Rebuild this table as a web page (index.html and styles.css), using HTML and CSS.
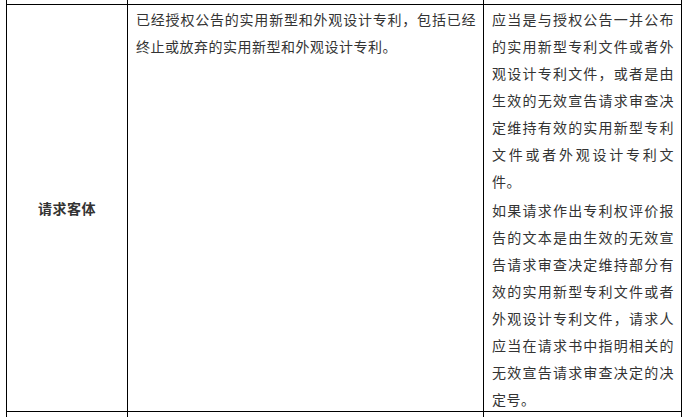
FILE: index.html
```html
<!DOCTYPE html>
<html lang="zh-CN">
<head>
<meta charset="utf-8">
<title>请求客体</title>
<link rel="stylesheet" href="styles.css">
</head>
<body>
<div class="page">
  <table class="grid">
    <colgroup>
      <col class="c1">
      <col class="c2">
      <col class="c3">
    </colgroup>
    <tr class="edge-row top-row">
      <td></td><td></td><td></td>
    </tr>
    <tr class="main-row">
      <td class="label">请求客体</td>
      <td class="text">
        <p class="para">已经授权公告的实用新型和外观设计专利，包括已经终止或放弃的实用新型和外观设计专利。</p>
      </td>
      <td class="text">
        <p class="para">应当是与授权公告一并公布的实用新型专利文件或者外观设计专利文件，或者是由生效的无效宣告请求审查决定维持有效的实用新型专利文件或者外观设计专利文件。</p>
        <p class="para next">如果请求作出专利权评价报告的文本是由生效的无效宣告请求审查决定维持部分有效的实用新型专利文件或者外观设计专利文件，请求人应当在请求书中指明相关的无效宣告请求审查决定的决定号。</p>
      </td>
    </tr>
    <tr class="edge-row bottom-row">
      <td></td><td></td><td></td>
    </tr>
  </table>
</div>
</body>
</html>
```
FILE: styles.css
```css
html, body {
  margin: 0;
  padding: 0;
  background: #ffffff;
  overflow: hidden;
}

.page {
  padding-left: 6px;
  font-family: "Noto Sans CJK SC", "Noto Sans", sans-serif;
  font-size: 14px;
  color: #333333;
  letter-spacing: 0.5px;
}

.grid {
  border-collapse: separate;
  border-spacing: 0;
  table-layout: fixed;
  width: 676px;
}

.c1 { width: 121px; }
.c2 { width: 356px; }
.c3 { width: 199px; }

.grid td {
  border-left: 1px solid #000000;
  border-bottom: 1px solid #000000;
  padding: 0;
}

.grid td:last-child {
  border-right: 1px solid #000000;
}

.top-row td {
  height: 4px;
}

.bottom-row td {
  height: 5px;
  border-bottom: none;
}

.main-row td {
  vertical-align: top;
}

.label {
  text-align: center;
  font-weight: bold;
  line-height: 27px;
}

.grid .main-row td.label {
  vertical-align: middle;
}

.text {
  padding: 1px 8px 0 8px;
  text-align: justify;
}

.grid .main-row td.text {
  padding: 1px 7px 0 8px;
}

.para {
  margin: 0;
  line-height: 27px;
}

.para.next {
  margin-top: 2px;
  margin-bottom: -2px;
}
```
